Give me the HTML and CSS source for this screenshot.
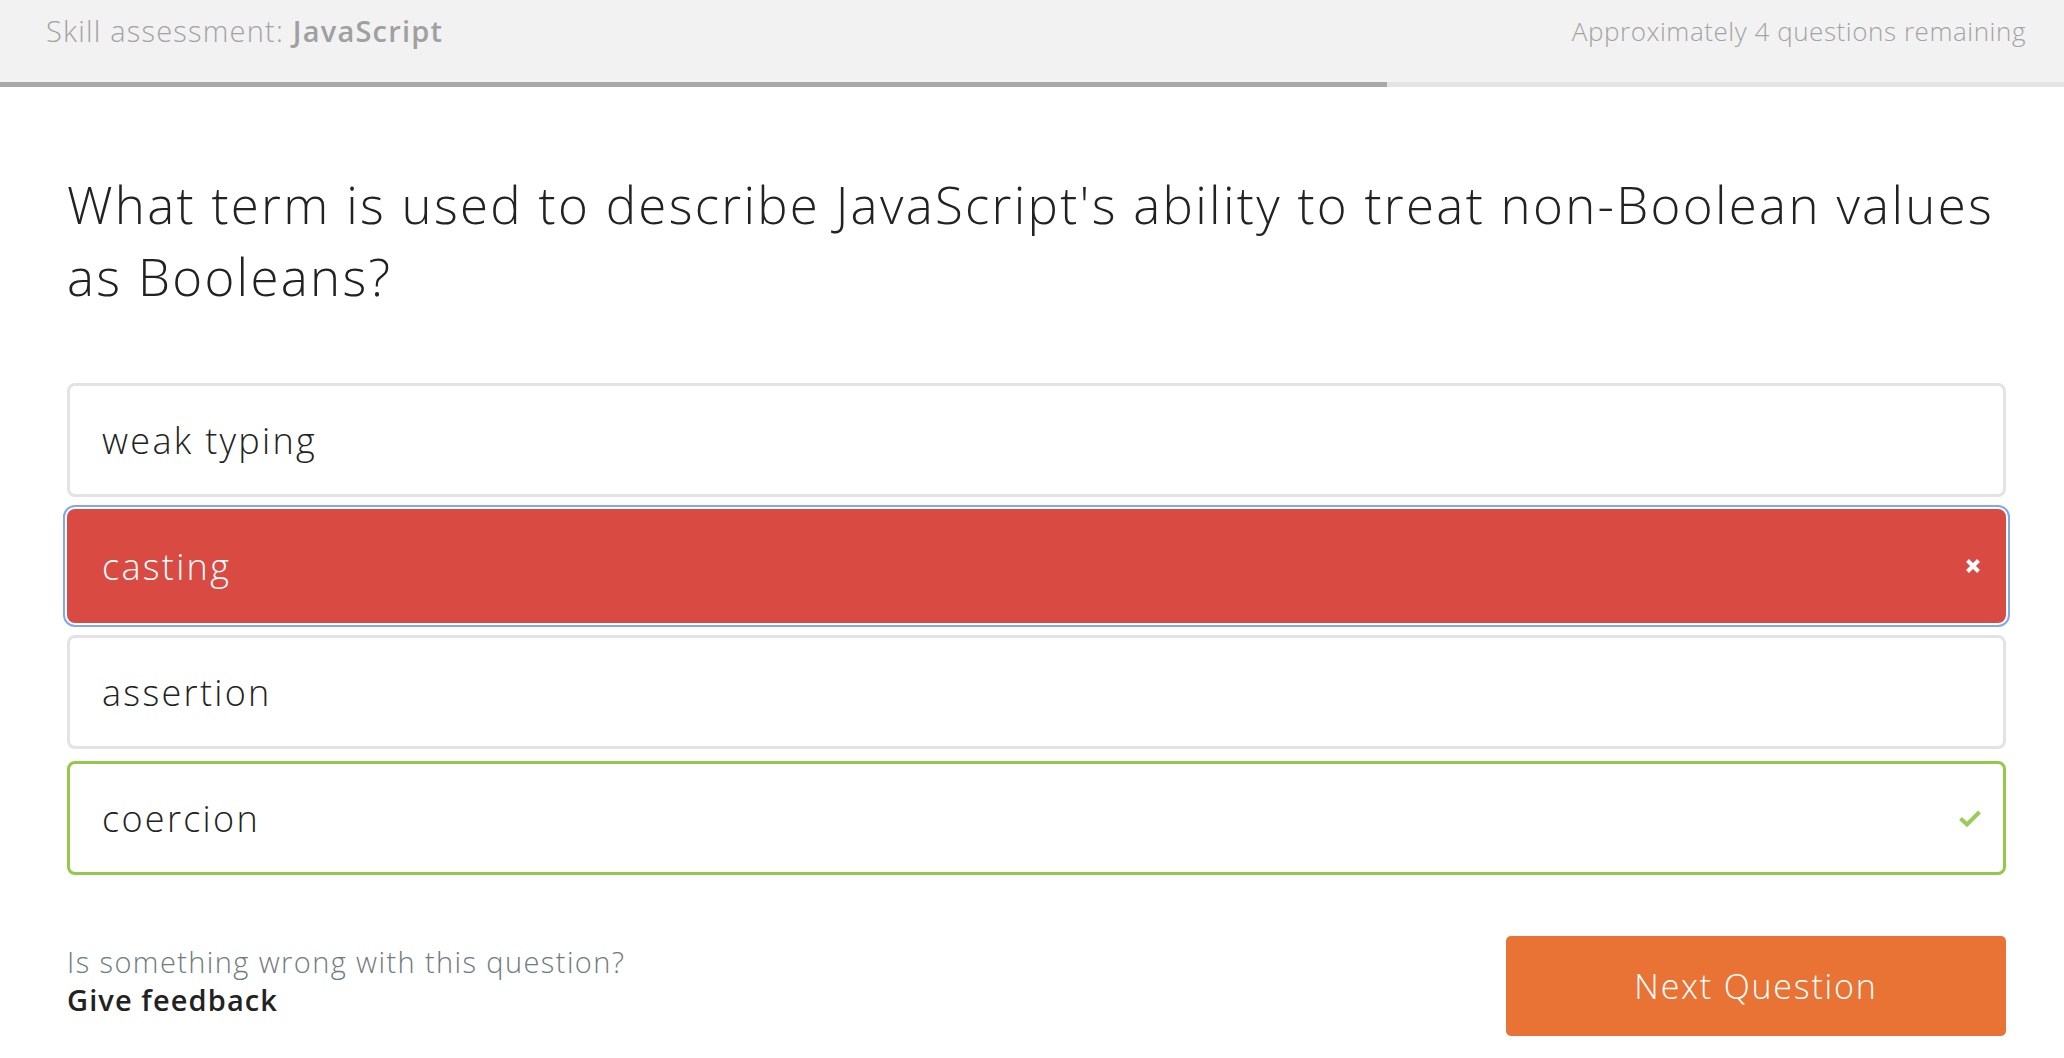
FILE: index.html
```html
<!DOCTYPE html>
<html lang="en">
<head>
<meta charset="utf-8">
<title>Skill assessment: JavaScript</title>
<link rel="stylesheet" href="styles.css">
</head>
<body>
<header class="topbar">
  <div class="topbar-title">Skill assessment: <strong>JavaScript</strong></div>
  <div class="topbar-remaining">Approximately 4 questions remaining</div>
</header>
<div class="progress"><div class="progress-fill" style="width: 67.2%"></div></div>
<main class="quiz">
  <h1 class="question">What term is used to describe JavaScript's ability to treat non-Boolean values as Booleans?</h1>
  <ul class="options">
    <li class="option">weak typing</li>
    <li class="option option-wrong"><span>casting</span>
      <svg class="icon" width="16" height="16" viewBox="0 0 16 16"><path d="M2.5 2.5 L13.5 13.5 M13.5 2.5 L2.5 13.5" stroke="#fff" stroke-width="4" stroke-linecap="butt"/></svg>
    </li>
    <li class="option">assertion</li>
    <li class="option option-right"><span>coercion</span>
      <svg class="icon" width="22" height="18" viewBox="0 0 22 18"><path d="M1.5 9.5 L8 15.5 L20.5 3" fill="none" stroke="#9bcc58" stroke-width="4"/></svg>
    </li>
  </ul>
  <footer class="quiz-footer">
    <div class="feedback">
      <div class="feedback-q">Is something wrong with this question?</div>
      <a class="feedback-link" href="#">Give feedback</a>
    </div>
    <button class="next-btn">Next Question</button>
  </footer>
</main>
</body>
</html>
```

FILE: styles.css
```css
* { box-sizing: border-box; }
body {
  margin: 0;
  font-family: "Open Sans", Lato, sans-serif;
  background: #fff;
  color: #222;
}
.topbar {
  height: 82px;
  background: #f2f2f2;
  display: flex;
  justify-content: space-between;
  align-items: flex-start;
  padding: 11px 38px 0 46px;
  font-size: 29px;
  line-height: 40px;
  font-weight: 300;
  color: #a3a3a3;
}
.topbar-title { letter-spacing: 1.2px; }
.topbar-title strong { font-weight: 600; color: #a0a0a0; }
.topbar-remaining { font-size: 26px; letter-spacing: 0.55px; }
.progress {
  height: 5px;
  background: #e4e4e4;
}
.progress-fill {
  height: 100%;
  background: #a8a8a8;
}
.quiz {
  padding: 0 58px 0 67px;
}
.question {
  margin: 81px 0 0;
  font-size: 51px;
  line-height: 72px;
  font-weight: 300;
  letter-spacing: 2.3px;
  color: #222;
}
.options {
  list-style: none;
  margin: 71px 0 0;
  padding: 0;
  display: flex;
  flex-direction: column;
  gap: 12px;
}
.option {
  height: 114px;
  border: 3px solid #e3e3e3;
  border-radius: 8px;
  padding: 0 22px 0 32px;
  display: flex;
  align-items: center;
  justify-content: space-between;
  font-size: 36px;
  font-weight: 300;
  letter-spacing: 2.3px;
  color: #222;
}
.option-wrong {
  background: #d94a43;
  border-color: #d94a43;
  color: #fff;
  outline: 2px solid #7ea8f2;
  outline-offset: 2px;
}
.option-right {
  border-color: #92c94a;
}
.icon { flex: none; }
.quiz-footer {
  margin-top: 61px;
  display: flex;
  justify-content: space-between;
  align-items: flex-start;
}
.feedback {
  padding-top: 7px;
}
.feedback-q {
  font-size: 29px;
  line-height: 38px;
  font-weight: 300;
  letter-spacing: 1.4px;
  color: #6f7b80;
}
.feedback-link {
  font-size: 29px;
  line-height: 38px;
  font-weight: 600;
  letter-spacing: 1.1px;
  color: #222;
  text-decoration: none;
}
.next-btn {
  width: 500px;
  height: 100px;
  border: 0;
  border-radius: 5px;
  background: #e87335;
  color: #fff;
  font-family: inherit;
  font-size: 34px;
  font-weight: 300;
  letter-spacing: 1.8px;
}
```
